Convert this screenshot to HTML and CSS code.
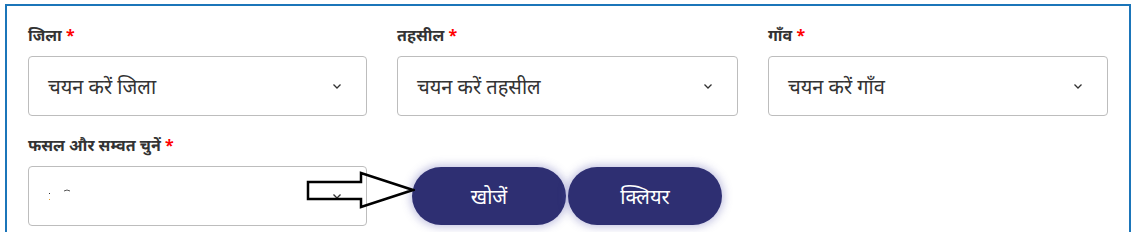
FILE: index.html
```html
<!DOCTYPE html>
<html lang="hi">
<head>
<meta charset="utf-8">
<link rel="stylesheet" href="styles.css">
</head>
<body>
<div class="frame">
  <div class="grid">
    <div class="field">
      <div class="label">जिला <span class="req">*</span></div>
      <div class="select"><span class="val">चयन करें जिला</span><svg class="chev" width="8" height="5" viewBox="0 0 8 5"><path d="M0.5 0.5 L4 4 L7.5 0.5" fill="none" stroke="#333" stroke-width="1.3"/></svg></div>
    </div>
    <div class="field">
      <div class="label">तहसील <span class="req">*</span></div>
      <div class="select"><span class="val">चयन करें तहसील</span><svg class="chev" width="8" height="5" viewBox="0 0 8 5"><path d="M0.5 0.5 L4 4 L7.5 0.5" fill="none" stroke="#333" stroke-width="1.3"/></svg></div>
    </div>
    <div class="field">
      <div class="label">गाँव <span class="req">*</span></div>
      <div class="select"><span class="val">चयन करें गाँव</span><svg class="chev" width="8" height="5" viewBox="0 0 8 5"><path d="M0.5 0.5 L4 4 L7.5 0.5" fill="none" stroke="#333" stroke-width="1.3"/></svg></div>
    </div>
    <div class="field">
      <div class="label">फसल और सम्वत चुनें <span class="req">*</span></div>
      <div class="select"><svg class="marks" width="30" height="16" viewBox="0 0 30 16"><rect x="1" y="5" width="1" height="1" fill="#333"/><rect x="1" y="11" width="1" height="1" fill="#e8a030"/><path d="M16 3 Q19 1 22 3" fill="none" stroke="#555" stroke-width="1"/></svg><svg class="chev" width="8" height="5" viewBox="0 0 8 5"><path d="M0.5 0.5 L4 4 L7.5 0.5" fill="none" stroke="#333" stroke-width="1.3"/></svg></div>
    </div>
    <div class="actions">
      <button class="btn">खोजें</button>
      <button class="btn">क्लियर</button>
    </div>
  </div>
  <svg class="arrow" width="110" height="40" viewBox="0 0 110 40"><path d="M3 12 L56 12 L56 3 L108 20 L56 37 L56 29 L3 29 Z" fill="none" stroke="#000" stroke-width="2.5" stroke-linejoin="miter"/></svg>
</div>
</body>
</html>
```

FILE: styles.css
```css
* { box-sizing: border-box; }
html, body { margin: 0; padding: 0; background: #fff; }
body {
  padding: 4px 3px 0 5px;
  font-family: "Noto Sans", "Lato", sans-serif;
  color: #333;
  height: 232px;
  overflow: hidden;
}
.frame {
  position: relative;
  border: 2px solid #1b75b9;
  border-bottom: none;
  height: 240px;
  padding: 19px 21px 0 21px;
}
.grid {
  display: grid;
  grid-template-columns: 339px 341px 340px;
  column-gap: 30px;
  row-gap: 19px;
}
.field { display: flex; flex-direction: column; }
.label {
  font-size: 16px;
  font-weight: 700;
  line-height: 20px;
  height: 20px;
  margin-bottom: 11px;
  color: #333;
}
.req { color: #f00; }
.select {
  height: 60px;
  border: 1px solid #bdbdbd;
  border-radius: 4px;
  display: flex;
  align-items: center;
  padding: 0 25px 0 19px;
  font-size: 20px;
  color: #333;
}
.val { flex: 1; }
.marks { flex: none; margin-right: auto; }
.chev { flex: none; }
.actions {
  grid-column: 2 / span 2;
  display: flex;
  align-items: flex-end;
  gap: 2px;
  padding-left: 15px;
  padding-bottom: 1px;
}
.btn {
  width: 154px;
  height: 58px;
  border: none;
  border-radius: 29px;
  background: #2e2f72;
  color: #fff;
  font-family: "Noto Sans", "Lato", sans-serif;
  font-size: 20px;
  box-shadow: 0 0 8px 2px rgba(80, 80, 170, 0.35);
  cursor: pointer;
}
.arrow {
  position: absolute;
  left: 298px;
  top: 164px;
}
```
